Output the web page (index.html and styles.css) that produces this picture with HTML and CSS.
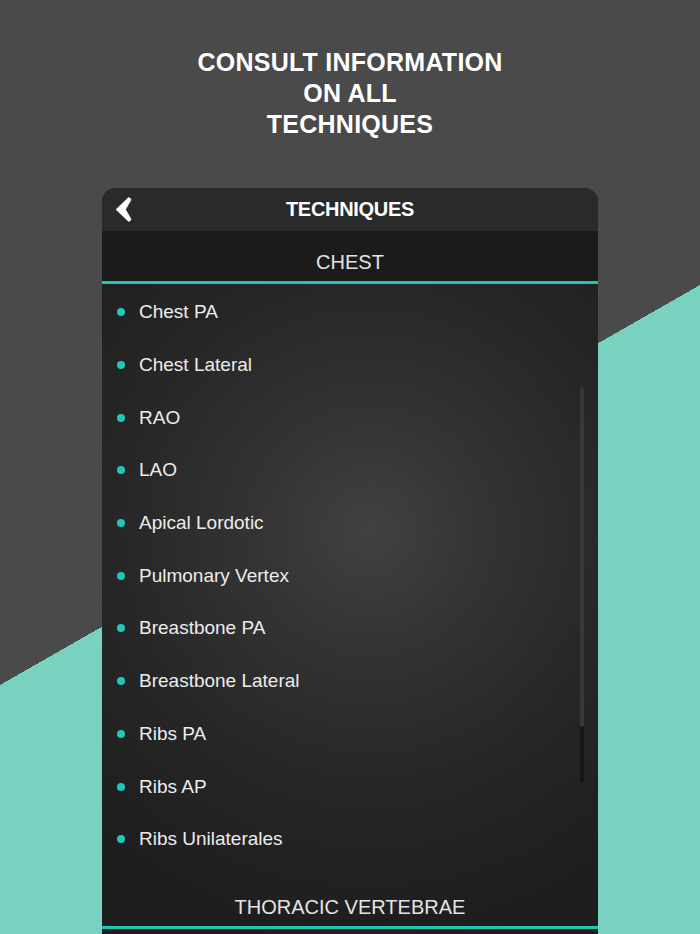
FILE: index.html
```html
<!DOCTYPE html>
<html>
<head>
<meta charset="utf-8">
<link rel="stylesheet" href="styles.css">
</head>
<body>
<div class="page">
  <h1 class="headline">CONSULT INFORMATION<br>ON ALL<br>TECHNIQUES</h1>
  <div class="card">
    <div class="topbar">
      <svg class="back" viewBox="0 0 20 28" width="20" height="28">
        <polygon points="1,13.5 13.5,1.5 15.5,2.5 16,4 10.5,13.5 16,23 15.5,24.5 13.5,25.5" fill="#ffffff" stroke="#ffffff" stroke-width="0.6" stroke-linejoin="round"/>
      </svg>
      <span class="topbar-title">TECHNIQUES</span>
    </div>
    <div class="content">
      <div class="section section-first">CHEST</div>
      <ul class="list">
        <li class="item"><span class="dot"></span>Chest PA</li>
        <li class="item"><span class="dot"></span>Chest Lateral</li>
        <li class="item"><span class="dot"></span>RAO</li>
        <li class="item"><span class="dot"></span>LAO</li>
        <li class="item"><span class="dot"></span>Apical Lordotic</li>
        <li class="item"><span class="dot"></span>Pulmonary Vertex</li>
        <li class="item"><span class="dot"></span>Breastbone PA</li>
        <li class="item"><span class="dot"></span>Breastbone Lateral</li>
        <li class="item"><span class="dot"></span>Ribs PA</li>
        <li class="item"><span class="dot"></span>Ribs AP</li>
        <li class="item"><span class="dot"></span>Ribs Unilaterales</li>
      </ul>
      <div class="section">THORACIC VERTEBRAE</div>
      <div class="scrollbar"><div class="thumb"></div></div>
    </div>
  </div>
</div>
</body>
</html>
```

FILE: styles.css
```css
html, body {
  margin: 0;
  padding: 0;
}
body {
  width: 700px;
  height: 934px;
  overflow: hidden;
  font-family: "Liberation Sans", Arial, sans-serif;
  background-color: #79d1c0;
  background-image:
    linear-gradient(#4a4a4a, #4a4a4a),
    linear-gradient(to bottom right, #4a4a4a 50%, #79d1c0 50%);
  background-size: 700px 285px, 700px 400px;
  background-position: 0 0, 0 285px;
  background-repeat: no-repeat;
}
.page {
  display: flex;
  flex-direction: column;
  align-items: center;
}
.headline {
  margin: 0;
  padding-top: 47px;
  font-size: 25px;
  line-height: 31px;
  font-weight: bold;
  color: #ffffff;
  text-align: center;
  letter-spacing: 0.25px;
}
.card {
  margin-top: 48px;
  width: 496px;
  height: 760px;
  border-radius: 14px 14px 0 0;
  overflow: hidden;
  background: #1d1d1d;
}
.topbar {
  height: 43px;
  background: #2a2a2a;
  display: flex;
  align-items: center;
  justify-content: center;
  position: relative;
}
.back {
  position: absolute;
  left: 13px;
  top: 8px;
}
.topbar-title {
  color: #ffffff;
  font-size: 20px;
  font-weight: bold;
  letter-spacing: -0.3px;
}
.content {
  position: relative;
  height: 717px;
  background: radial-gradient(circle at 54% 300px, #414141 0, #333333 120px, #262626 260px, #1d1d1d 420px);
}
.section {
  height: 50px;
  border-bottom: 3px solid #1ec6b6;
  display: flex;
  align-items: flex-end;
  justify-content: center;
  color: #e4e4e4;
  font-size: 20px;
  line-height: 38px;
}
.section-first {
  background: #1b1b1b;
}
.list {
  list-style: none;
  margin: 0;
  padding: 2px 0 10px 0;
}
.item {
  height: 52.7px;
  display: flex;
  align-items: center;
  padding-left: 15px;
  color: #ececec;
  font-size: 19px;
}
.dot {
  width: 8px;
  height: 8px;
  border-radius: 50%;
  background: #1fc9b8;
  margin-right: 14px;
}
.scrollbar {
  position: absolute;
  left: 478px;
  top: 156px;
  width: 4px;
  height: 395px;
  border-radius: 2px;
  background: #161616;
}
.thumb {
  height: 340px;
  border-radius: 2px;
  background: #383838;
}
```
